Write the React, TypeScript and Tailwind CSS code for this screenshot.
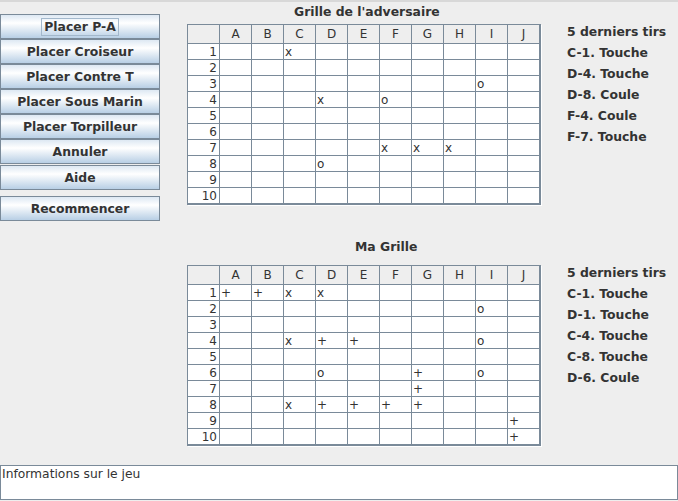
import React from "react";

const COLS = ["A", "B", "C", "D", "E", "F", "G", "H", "I", "J"];

type Marks = Record<string, string>;

const adv: Marks = {
  "1C": "x",
  "3I": "o",
  "4D": "x",
  "4F": "o",
  "7F": "x",
  "7G": "x",
  "7H": "x",
  "8D": "o",
};

const mine: Marks = {
  "1A": "+",
  "1B": "+",
  "1C": "x",
  "1D": "x",
  "2I": "o",
  "4C": "x",
  "4D": "+",
  "4E": "+",
  "4I": "o",
  "6D": "o",
  "6G": "+",
  "6I": "o",
  "7G": "+",
  "8C": "x",
  "8D": "+",
  "8E": "+",
  "8F": "+",
  "8G": "+",
  "9J": "+",
  "10J": "+",
};

function Grid({ marks }: { marks: Marks }) {
  return (
    <div className="w-[354px] border border-[#7a8a99] bg-white shadow-[1px_1px_0_#ffffff]">
      <div className="flex">
        <div className="w-[32px] h-[19px] border-r border-b border-[#7a8a99] bg-[#eeeeee]" />
        {COLS.map((c) => (
          <div
            key={c}
            className="w-[32px] h-[19px] border-r border-b border-[#7a8a99] bg-[#eeeeee] flex items-center justify-center text-[12px] leading-none text-[#333333]"
          >
            {c}
          </div>
        ))}
      </div>
      {Array.from({ length: 10 }, (_, i) => i + 1).map((r) => (
        <div key={r} className="flex">
          <div className="w-[32px] h-[16px] border-r border-b border-[#7a8a99] flex items-center justify-end pr-[2px] text-[12px] leading-none text-[#333333]">
            {r}
          </div>
          {COLS.map((c) => (
            <div
              key={c}
              className="w-[32px] h-[16px] border-r border-b border-[#7a8a99] flex items-center pl-[1px] text-[12px] leading-none text-[#333333]"
            >
              {marks[`${r}${c}`] ?? ""}
            </div>
          ))}
        </div>
      ))}
    </div>
  );
}

function Btn({ label, focus, className = "" }: { label: string; focus?: boolean; className?: string }) {
  return (
    <div
      className={`h-[25px] w-[160px] border border-[#7a8a99] bg-[linear-gradient(to_bottom,#dde8f3_0%,#ffffff_35%,#b8cfe5_100%)] flex items-center justify-center text-[12.4px] font-bold text-[#333333] ${className}`}
    >
      {focus ? (
        <span className="border border-[#a3b8cc] px-[2px] leading-[16px]">{label}</span>
      ) : (
        <span className="leading-[16px]">{label}</span>
      )}
    </div>
  );
}

function Shots({ items }: { items: string[] }) {
  return (
    <div className="flex flex-col text-[12.4px] font-bold text-[#333333] leading-[21px] whitespace-nowrap">
      <div>5 derniers tirs</div>
      {items.map((t) => (
        <div key={t}>{t}</div>
      ))}
    </div>
  );
}

export default function App() {
  return (
    <div
      className="w-[678px] h-[501px] bg-[#eeeeee] flex flex-col overflow-hidden"
      style={{ fontFamily: '"DejaVu Sans", "Noto Sans", sans-serif' }}
    >
      <div className="h-[2px] bg-[#d8d8d8]" />
      <div className="h-[463px] flex">
        <div className="w-[160px] pt-[12px] flex flex-col">
          <Btn label="Placer P-A" focus />
          <Btn label="Placer Croiseur" />
          <Btn label="Placer Contre T" />
          <Btn label="Placer Sous Marin" />
          <Btn label="Placer Torpilleur" />
          <Btn label="Annuler" />
          <Btn label="Aide" className="mt-[1px]" />
          <Btn label="Recommencer" className="mt-[6px]" />
        </div>
        <div className="ml-[27px] w-[355px] flex flex-col">
          <div className="mt-[2px] h-[16px] leading-[16px] pl-[107px] text-[12.4px] font-bold text-[#333333] whitespace-nowrap">
            Grille de l'adversaire
          </div>
          <div className="mt-[4px]">
            <Grid marks={adv} />
          </div>
          <div className="mt-[34px] h-[16px] leading-[16px] pl-[168px] text-[12.4px] font-bold text-[#333333] whitespace-nowrap">
            Ma Grille
          </div>
          <div className="mt-[10px]">
            <Grid marks={mine} />
          </div>
        </div>
        <div className="ml-[25px] pt-[19px] flex flex-col">
          <Shots items={["C-1. Touche", "D-4. Touche", "D-8. Coule", "F-4. Coule", "F-7. Touche"]} />
          <div className="mt-[115px]">
            <Shots items={["C-1. Touche", "D-1. Touche", "C-4. Touche", "C-8. Touche", "D-6. Coule"]} />
          </div>
        </div>
      </div>
      <div className="h-[35px] border border-[#7a8a99] bg-white px-[1px] pt-[1px] text-[12.3px] leading-[15px] text-[#333333]">
        Informations sur le jeu
      </div>
    </div>
  );
}
